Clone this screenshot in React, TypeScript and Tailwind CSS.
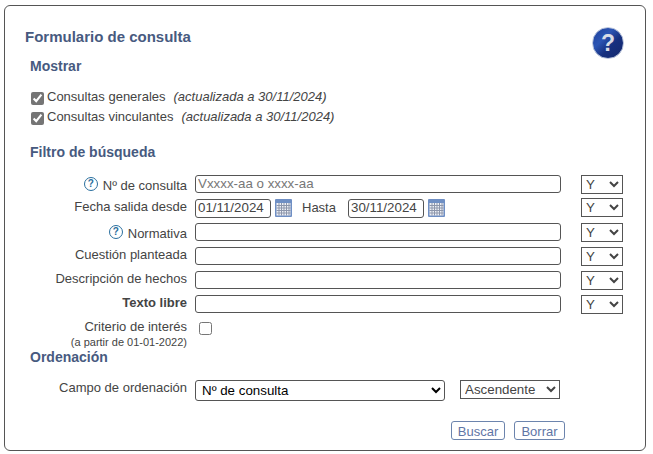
import type { ReactNode } from 'react';

function BigHelp() {
    return <div className="flex items-center justify-center w-8 h-8 rounded-full border-[1.5px] border-[#b9c4dc] bg-[linear-gradient(135deg,#1d3f9a_0%,#2c55b4_35%,#16307f_60%,#14286c_100%)] text-[23px] leading-none font-bold text-[#d9dce6]">
        ?
    </div>;
}

function SmallHelp() {
    return <span className="inline-flex items-center justify-center w-[14px] h-[14px] rounded-full border-[1.5px] border-[#2a6f9e] text-[10px] leading-none font-bold text-[#2a6f9e]">
        ?
    </span>;
}

function CalendarIcon() {
    const lines = [4, 6.5, 9, 11.5, 14];
    return <svg width="17" height="18" viewBox="0 0 17 18" className="shrink-0">
        <rect x="0" y="0" width="17" height="18" rx="1" fill="#6f8fc4" />
        <rect x="1.5" y="4" width="14" height="12.5" fill="#eef0f5" />
        {lines.map(x => <line key={x} x1={x} x2={x} y1="4" y2="16.5" stroke="#8d96ab" strokeWidth="1" />)}
        {[6.5, 9, 11.5, 14].map(y => <line key={y} x1="1.5" x2="15.5" y1={y} y2={y} stroke="#8d96ab" strokeWidth="1" />)}
    </svg>;
}

function YSelect() {
    return <select className="w-[42px] h-[19px] ml-5 shrink-0 border border-[#555] bg-white text-[13.33px] text-[#444]">
        <option>Y</option>
    </select>;
}

function Row({ label, children }: { label: ReactNode; children: ReactNode }) {
    return <div className="flex items-center h-[18px]">
        <div className="w-[162px] shrink-0 text-right whitespace-nowrap">{label}</div>
        <div className="flex items-center flex-1 ml-2">{children}</div>
    </div>;
}

function TextRow({ label, placeholder }: { label: ReactNode; placeholder?: string }) {
    return <Row label={label}>
        <input
            placeholder={placeholder}
            className="w-[366px] h-[18px] px-[2px] border border-[#555] rounded-[3px] bg-white text-[13.33px] placeholder:text-[#777] outline-none"
        />
        <YSelect />
    </Row>;
}

function DateInput({ value }: { value: string }) {
    return <input
        defaultValue={value}
        className="w-[76px] h-[19px] px-[2px] border border-[#555] rounded-[3px] bg-white text-[13.33px] text-[#444] outline-none"
    />;
}

function SectionTitle({ children }: { children: ReactNode }) {
    return <h2 className="ml-[5px] text-sm leading-[15px] font-bold text-[#475a80]">{children}</h2>;
}

function PlainLabel({ children }: { children: ReactNode }) {
    return <span className="block pb-0.5">{children}</span>;
}

export default function App() {
    return <div className="w-[653px] h-[454px] bg-white pt-[5px] pl-1 font-['Liberation_Sans',Arial,sans-serif] text-[13px] text-[#444]">
        <div className="w-[642px] h-[446px] border border-[#555] rounded-md pl-5 pr-[21px]">
            <div className="flex items-start justify-between pt-[21px]">
                <h1 className="mt-0.5 text-[15px] leading-4 font-bold text-[#475a80]">Formulario de consulta</h1>
                <BigHelp />
            </div>

            <SectionTitle>Mostrar</SectionTitle>

            <div className="flex flex-col gap-[6px] mt-4 ml-[6px]">
                <label className="flex items-center h-[14px]">
                    <input type="checkbox" defaultChecked className="w-[13px] h-[13px] m-0 mt-0.5 accent-[#757575]" />
                    <span className="ml-[3px]">Consultas generales</span>
                    <span className="ml-2 italic">(actualizada a 30/11/2024)</span>
                </label>
                <label className="flex items-center h-[14px]">
                    <input type="checkbox" defaultChecked className="w-[13px] h-[13px] m-0 mt-0.5 accent-[#757575]" />
                    <span className="ml-[3px]">Consultas vinculantes</span>
                    <span className="ml-2 italic">(actualizada a 30/11/2024)</span>
                </label>
            </div>

            <div className="mt-[21px]">
                <SectionTitle>Filtro de búsqueda</SectionTitle>
            </div>

            <div className="flex flex-col gap-[6px] mt-[15px]">
                <TextRow
                    label={<span className="inline-flex items-center gap-[5px]"><SmallHelp /><span className="mt-1">Nº de consulta</span></span>}
                    placeholder="Vxxxx-aa o xxxx-aa"
                />
                <Row label={<PlainLabel>Fecha salida desde</PlainLabel>}>
                    <DateInput value="01/11/2024" />
                    <span className="ml-1"><CalendarIcon /></span>
                    <span className="ml-[10px] w-[34px]">Hasta</span>
                    <span className="ml-3"><DateInput value="30/11/2024" /></span>
                    <span className="ml-1"><CalendarIcon /></span>
                    <span className="ml-[116px]"><YSelect /></span>
                </Row>
                <TextRow label={<span className="inline-flex items-center gap-[5px]"><SmallHelp /><span className="mt-1">Normativa</span></span>} />
                <TextRow label={<PlainLabel>Cuestión planteada</PlainLabel>} />
                <TextRow label={<PlainLabel>Descripción de hechos</PlainLabel>} />
                <TextRow label={<PlainLabel><b>Texto libre</b></PlainLabel>} />
            </div>

            <div className="flex mt-[7px] h-[30px]">
                <div className="w-[162px] text-right">
                    <div className="leading-[14px]">Criterio de interés</div>
                    <div className="text-[11px] leading-[14px] mt-px whitespace-nowrap">(a partir de 01-01-2022)</div>
                </div>
                <input type="checkbox" className="w-[13px] h-[13px] ml-3 mt-[2px]" />
            </div>

            <SectionTitle>Ordenación</SectionTitle>

            <div className="flex items-start h-[21px] mt-[15px]">
                <div className="w-[162px] leading-[15px] text-right">Campo de ordenación</div>
                <select className="w-[250px] h-[21px] ml-2 pl-0.5 border border-[#555] rounded-[3px] bg-white text-[13.33px] text-black">
                    <option>Nº de consulta</option>
                </select>
                <select className="w-[100px] h-[19px] ml-[15px] -mr-px border border-[#555] bg-white text-[13.33px] text-[#444]">
                    <option>Ascendente</option>
                </select>
            </div>

            <div className="flex justify-end gap-[9px] mt-5 mr-[59px]">
                <button className="w-[54px] h-[19px] border border-[#6c84ad] rounded-[3px] bg-white text-[#5f75a5]">Buscar</button>
                <button className="w-[51px] h-[19px] border border-[#6c84ad] rounded-[3px] bg-white text-[#5f75a5]">Borrar</button>
            </div>
        </div>
    </div>;
}
